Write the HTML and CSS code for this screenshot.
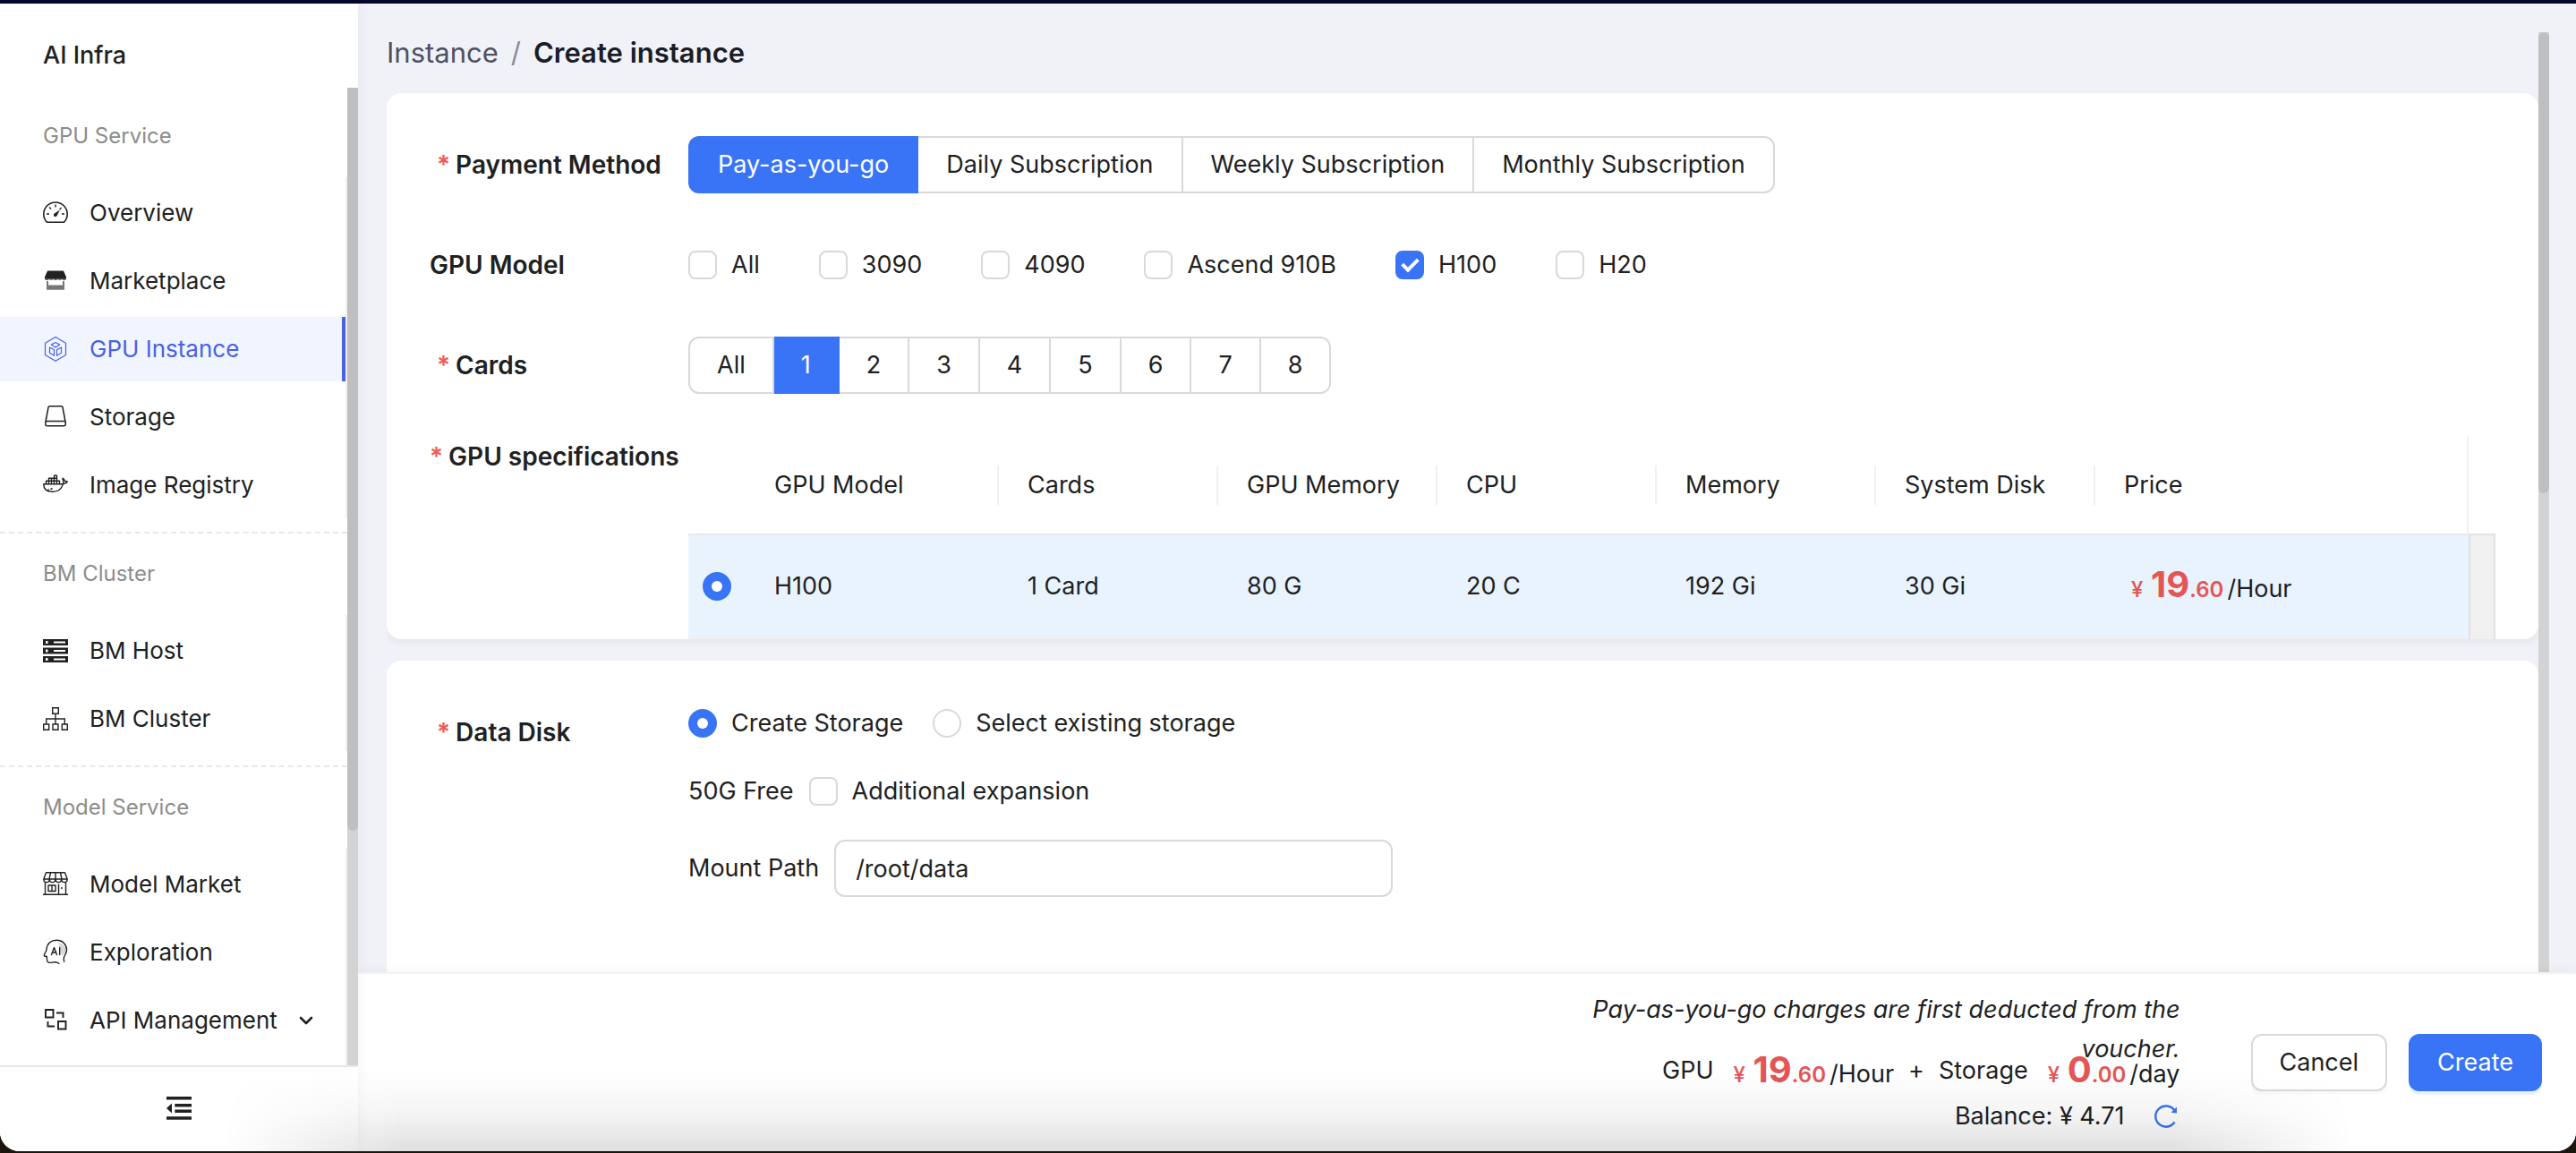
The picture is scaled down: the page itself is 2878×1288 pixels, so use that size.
FILE: index.html
```html
<!DOCTYPE html>
<html lang="en">
<head>
<meta charset="utf-8">
<title>Create instance - AI Infra</title>
<link rel="stylesheet" href="styles.css">
</head>
<body>
<div class="window">
  <aside class="sidebar">
    <h1 class="brand">AI Infra</h1>
    <div class="side-scroll">
      <nav class="nav">
        <section class="group">
          <h2 class="group-title">GPU Service</h2>
          <ul class="menu">
            <li><a class="item" href="#overview"><svg class="icon" viewBox="0 0 28 28"><path d="M4.500 24.300 A13.200 13.200 0 1 1 23.500 24.300 Z" fill="none" stroke="currentColor" stroke-width="1.600" stroke-linejoin="round"/><path d="M14 4.500v3M7 7.500l2 2M4 15h3M21 15h3M20.500 8l-2 2" stroke="currentColor" stroke-width="1.400"/><path d="M18.800 10.500l-3 6.300a2 2 0 1 1-2.600-2.600z" fill="currentColor"/></svg><span>Overview</span></a></li>
            <li><a class="item" href="#marketplace"><svg class="icon" viewBox="0 0 28 28"><path d="M5 2.500h18l3 7v1.500H2V9.500z" fill="currentColor"/><path d="M2 11h24v1a3 2 0 0 1-5 0 3 2 0 0 1-4.500 0 3 2 0 0 1-5 0 3 2 0 0 1-4.500 0 3 2 0 0 1-5 0z" fill="#555"/><path d="M5 14v8.500h18V14" fill="none" stroke="#777" stroke-width="2"/><path d="M4 18.500h20v5H4z" fill="#777"/></svg><span>Marketplace</span></a></li>
            <li><a class="item active" href="#instance" aria-current="page"><svg class="icon" viewBox="0 0 28 28"><g fill="none" stroke="currentColor" stroke-width="1.200" stroke-linejoin="round"><path d="M14 .5l11.500 6.700v13.400L14 27.300 2.500 20.600V7.200z"/><path d="M14 6.500l4.700 2.500-4.700 3-4.700-3z"/><path d="M7.500 12l5 2.800v6.400l-5-2.900zM20.500 12l-5 2.800v6.400l5-2.900z"/></g></svg><span>GPU Instance</span></a></li>
            <li><a class="item" href="#storage"><svg class="icon" viewBox="0 0 28 28"><g fill="none" stroke="currentColor" stroke-width="1.500" stroke-linejoin="round"><path d="M3 19L6 3q.3-1.300 1.600-1.300h12.800q1.300 0 1.600 1.300l3 16"/><rect x="2.800" y="18.500" width="22.500" height="5.200" rx="2"/></g></svg><span>Storage</span></a></li>
            <li><a class="item" href="#registry"><svg class="icon" viewBox="0 0 28 28"><g fill="none" stroke="currentColor" stroke-width="1.400" stroke-linejoin="round"><path d="M.7 12.700h20.800c1.700-.2 1.500-1.300 1.200-3-.3-1.400-.7-2-.7-3.500 1.700.9 2.300 1.800 2.500 3.300 1.200-.1 2 .1 2.800.6-.9 1.600-2.300 2.200-4.600 2.300C20.700 18.500 16.800 21.300 11 21.300 4 21.300.7 18.500.7 12.700z"/><path d="M3.500 12.500V9.300h15v3.200M6.500 9.300V6.200h9v6M9.500 6.200v6.300M12.500 12.500V3.300h3v3M6.500 9.300v3"/><path d="M4.500 19.500c3 0 5.500-1.200 6.800-3.200" stroke-dasharray="2.500 1.500"/></g></svg><span>Image Registry</span></a></li>
          </ul>
        </section>
        <section class="group">
          <h2 class="group-title">BM Cluster</h2>
          <ul class="menu">
            <li><a class="item" href="#bm-host"><svg class="icon" viewBox="0 0 28 28"><path d="M0 1h28v7H0zM0 10.500h28v7H0zM0 20h28v7H0z" fill="currentColor"/><path d="M3 3h2.500v3H3zM12 3.500h13v2H12zM3 12.500h2.500v3H3zM12 13h13v2H12zM3 22h2.500v3H3zM12 22.500h13v2H12z" fill="#fff"/></svg><span>BM Host</span></a></li>
            <li><a class="item" href="#bm-cluster"><svg class="icon" viewBox="0 0 28 28"><path d="M10.700 1.700h6.600v6.600h-6.600zM.7 20h6v6.300h-6zM11 20h6v6.300h-6zM21.300 20h6v6.300h-6zM14 8.300V20M3.700 20v-6h20.600v6" fill="none" stroke="currentColor" stroke-width="1.400"/></svg><span>BM Cluster</span></a></li>
          </ul>
        </section>
        <section class="group">
          <h2 class="group-title">Model Service</h2>
          <ul class="menu">
            <li><a class="item" href="#market"><svg class="icon" viewBox="0 0 28 28"><g fill="none" stroke="currentColor" stroke-width="1.400" stroke-linejoin="round"><path d="M3.500.8h21l2.700 7.200H.8zM8.500.8L7 8M14 .8V8M19.500.8L21 8"/><path d="M.8 8c0 4.800 6.300 4.800 6.500 0 .2 4.800 6.500 4.800 6.700 0 .2 4.800 6.500 4.800 6.700 0 .2 4.800 6.500 4.800 6.500 0"/><path d="M2.500 11.500V25M25.500 11.500V25M0 25.300h28M17.500 25V13.500M6 15h8v6.500H6zM10 15v6.500M21 17v2"/></g></svg><span>Model Market</span></a></li>
            <li><a class="item" href="#exploration"><svg class="icon" viewBox="0 0 28 28"><path d="M17 3q8 2 9 9l-5 6q-2-10-4-15z" fill="#d8d8d8"/><g fill="none" stroke="currentColor" stroke-width="1.400" stroke-linecap="round" stroke-linejoin="round"><path d="M4 10.500C4.500 4 9 .3 15 .3 22 .3 26.500 5 26.500 11c0 4-2.500 6-3.200 9 -.3 2 0 3 .4 4.200M4 10.500c0 2.500-2.500 4.500-2.700 6.500 0 1.300 1.200 1.500 3 1.500 0 3 .2 6 1.800 6.700 2 .8 5-.6 7.500-.4 2 .2 3.800.7 4.400 1.700"/><path d="M9.500 16.500L12.500 8.500l3 8M10.500 14h4M18.700 8.500v8"/></g></svg><span>Exploration</span></a></li>
            <li><a class="item" href="#api"><svg class="icon" viewBox="0 0 28 28"><path d="M3 2h8.500v8.500H3zM17 15h8.500v8.500H17zM15 5.500h7.500V11M5.500 15v5.500H13" fill="none" stroke="currentColor" stroke-width="1.900"/></svg><span>API Management</span><svg class="chevron" viewBox="0 0 16 10"><path d="M2 2l6 6 6-6" fill="none" stroke="currentColor" stroke-width="2.600" stroke-linecap="round" stroke-linejoin="round"/></svg></a></li>
          </ul>
        </section>
      </nav>
      <div class="track"><div class="thumb thumb-nav"></div></div>
    </div>
    <button class="collapse" type="button" aria-label="Collapse menu"><svg class="icon" viewBox="0 0 28 28"><path d="M0 1h28v3.500H0zM9.300 9H28v3.500H9.300zM9.300 15.500H28V19H9.300zM0 23.200h28v3.500H0zM0 14l6-5.500v11z" fill="currentColor"/></svg></button>
  </aside>

  <div class="page">
    <div class="content">
      <main class="main">
        <nav class="crumbs" aria-label="Breadcrumb"><a href="#instance">Instance</a><span class="slash">/</span><span class="here">Create instance</span></nav>
        <form class="cards" id="create-form">
          <section class="card">
            <div class="row" role="radiogroup" aria-labelledby="l-pay">
              <span class="label indent" id="l-pay"><i class="req">*</i>Payment Method</span>
              <div class="segments segments-wide">
                <label class="segment"><input type="radio" name="pay" checked>Pay-as-you-go</label>
                <label class="segment"><input type="radio" name="pay">Daily Subscription</label>
                <label class="segment"><input type="radio" name="pay">Weekly Subscription</label>
                <label class="segment"><input type="radio" name="pay">Monthly Subscription</label>
              </div>
            </div>
            <div class="row" role="group" aria-labelledby="l-model">
              <span class="label" id="l-model">GPU Model</span>
              <div class="checks">
                <label class="choice"><input class="box" type="checkbox">All</label>
                <label class="choice"><input class="box" type="checkbox">3090</label>
                <label class="choice"><input class="box" type="checkbox">4090</label>
                <label class="choice"><input class="box" type="checkbox">Ascend 910B</label>
                <label class="choice"><input class="box" type="checkbox" checked>H100</label>
                <label class="choice"><input class="box" type="checkbox">H20</label>
              </div>
            </div>
            <div class="row" role="radiogroup" aria-labelledby="l-cards">
              <span class="label indent" id="l-cards"><i class="req">*</i>Cards</span>
              <div class="segments">
                <label class="segment"><input type="radio" name="cards">All</label>
                <label class="segment"><input type="radio" name="cards" checked>1</label>
                <label class="segment"><input type="radio" name="cards">2</label>
                <label class="segment"><input type="radio" name="cards">3</label>
                <label class="segment"><input type="radio" name="cards">4</label>
                <label class="segment"><input type="radio" name="cards">5</label>
                <label class="segment"><input type="radio" name="cards">6</label>
                <label class="segment"><input type="radio" name="cards">7</label>
                <label class="segment"><input type="radio" name="cards">8</label>
              </div>
            </div>
            <div class="row row-table">
              <span class="label" id="l-spec"><i class="req">*</i>GPU specifications</span>
              <div class="table-wrap">
                <table class="specs" aria-labelledby="l-spec">
                  <colgroup><col class="c-pick"><col class="c-model"><col class="c-std"><col class="c-std"><col class="c-std"><col class="c-std"><col class="c-std"><col></colgroup>
                  <thead><tr><td></td><th><span>GPU Model</span></th><th><span>Cards</span></th><th><span>GPU Memory</span></th><th><span>CPU</span></th><th><span>Memory</span></th><th><span>System Disk</span></th><th><span>Price</span></th></tr></thead>
                  <tbody><tr><td class="pick"><input class="dot" type="radio" name="spec" aria-label="H100, 1 Card" checked></td><td>H100</td><td>1 Card</td><td>80 G</td><td>20 C</td><td>192 Gi</td><td>30 Gi</td><td><span class="price price-cell"><span class="yen">¥</span><b class="whole">19</b><b class="cents">.60</b><span class="unit">/Hour</span></span></td></tr></tbody>
                </table>
                <div class="table-scroll"></div>
              </div>
            </div>
          </section>
          <section class="card card-disk">
            <div class="row row-disk">
              <span class="label indent" id="l-disk"><i class="req">*</i>Data Disk</span>
              <div class="stack">
                <div class="line radios" role="radiogroup" aria-labelledby="l-disk">
                  <label class="choice"><input class="dot" type="radio" name="disk" checked>Create Storage</label>
                  <label class="choice"><input class="dot" type="radio" name="disk">Select existing storage</label>
                </div>
                <div class="line"><span>50G Free</span><label class="choice"><input class="box" type="checkbox">Additional expansion</label></div>
                <div class="line"><label for="mount">Mount Path</label><input class="field" id="mount" type="text" value="/root/data"></div>
              </div>
            </div>
          </section>
        </form>
      </main>
      <div class="track track-page"><div class="thumb thumb-page"></div></div>
    </div>
    <footer class="bar">
      <div class="summary">
        <p class="notice">Pay-as-you-go charges are first deducted from the voucher.</p>
        <div class="costs">
          <span class="cost-name">GPU</span><span class="price"><span class="yen">¥</span><b class="whole">19</b><b class="cents">.60</b><span class="unit">/Hour</span></span>
          <span class="plus">+</span>
          <span class="cost-name">Storage</span><span class="price"><span class="yen">¥</span><b class="whole">0</b><b class="cents">.00</b><span class="unit">/day</span></span>
        </div>
        <div class="balance"><span>Balance: ¥ 4.71</span><button class="refresh" type="button" aria-label="Refresh balance"><svg class="icon" viewBox="0 0 28 28"><path d="M23.500 20.500A11.600 11.600 0 1 1 23.200 7.200" fill="none" stroke="currentColor" stroke-width="2.400"/><path d="M26 3.500v7l-6.500-.8z" fill="currentColor"/></svg></button></div>
      </div>
      <div class="actions">
        <button class="btn" type="button">Cancel</button>
        <button class="btn btn-primary" type="submit" form="create-form">Create</button>
      </div>
    </footer>
  </div>
</div>
</body>
</html>
```
FILE: styles.css
```css
*, *::before, *::after { box-sizing: border-box; }
body {
  margin: 0;
  background: #1c150b;
  color: #202122;
  font: 27px/44px Inter, "Liberation Sans", "Noto Sans CJK SC", sans-serif;
}
button, input { font: inherit; color: inherit; margin: 0; }
h1, h2, p, ul { margin: 0; padding: 0; }
ul { list-style: none; }
a { color: inherit; text-decoration: none; }

.window {
  position: relative;
  display: grid;
  grid-template-columns: 400px minmax(0, 1fr);
  height: calc(100vh - 2px);
  border-top: 4px solid #03082b;
  border-radius: 0 0 22px 22px;
  background: #fff;
  overflow: hidden;
}
/* soft shade cast on the lower edge of the window */
.window::after {
  content: "";
  position: absolute;
  z-index: 3;
  left: 250px;
  right: 250px;
  bottom: 0;
  height: 90px;
  background: linear-gradient(rgba(0,0,0,0), rgba(0,0,0,.04) 50%, rgba(0,0,0,.12));
  -webkit-mask-image: linear-gradient(90deg, transparent, #000 200px, #000 calc(100% - 200px), transparent);
  mask-image: linear-gradient(90deg, transparent, #000 200px, #000 calc(100% - 200px), transparent);
  pointer-events: none;
}

.sidebar { z-index: 2; display: flex; flex-direction: column; min-height: 0; background: #fff; box-shadow: 0 0 16px rgba(0,0,0,.05); }
.brand { padding: 36px 48px 14px; font-size: 27px; line-height: 44px; font-weight: 500; }
.side-scroll { flex: 1; min-height: 0; display: grid; grid-template-columns: minmax(0, 1fr) 12px; }
.nav { display: flex; flex-direction: column; overflow: hidden; padding-top: 9px; }
.group + .group { margin-top: 16px; border-top: 2px dashed #e8e8e8; }
.group:last-child { flex: 1; display: flex; flex-direction: column; }
.group:last-child .menu { flex: 1; }
.group-title { padding: 24px 48px 25px; font-size: 24px; line-height: 42px; font-weight: 400; color: #8c8c8c; }
.menu { display: flex; flex-direction: column; gap: 4px; padding-top: 4px; border-right: 2px solid #f0f0f0; }
.item { display: flex; align-items: center; height: 72px; padding: 0 36px 0 48px; gap: 24px; font-size: 26px; }
.icon { display: block; width: 28px; height: 28px; overflow: visible; }
.active { background: #f0f5ff; color: #4a61e4; border-right: 4px solid #4a61e4; }
.chevron { width: 16px; height: 10px; margin-left: auto; }
.track { background: #d3d3d3; }
.thumb { background: #bfbfbf; border-radius: 0 0 6px 6px; }
.thumb-nav { height: 76%; }
.collapse { display: flex; align-items: center; justify-content: center; height: 96px; border: 0; border-top: 2px solid #e8e8e8; background: #fff; padding: 0 0 2px; }

.page { display: flex; flex-direction: column; min-width: 0; min-height: 0; background: #f1f2f8; }
.content { flex: 1; min-height: 0; display: grid; grid-template-columns: minmax(0, 1fr) 12px; padding: 0 30px 0 32px; }
.main { display: flex; flex-direction: column; min-height: 0; overflow: hidden; }
.track-page { margin-top: 32px; }
.thumb-page { height: 49%; border-radius: 6px; }
.crumbs { display: flex; gap: 14px; padding: 33px 0 23px; font-size: 31px; line-height: 44px; }
.crumbs a { color: #4e5162; }
.slash { color: #8a8c96; }
.here { font-weight: 600; color: #1a1d28; }
.cards { flex: 1; display: flex; flex-direction: column; gap: 24px; }
.card { display: flex; flex-direction: column; gap: 48px; padding: 48px 48px 0; border-radius: 16px; background: #fff; box-shadow: 0 4px 8px rgba(0,0,0,.05); }
.card-disk { flex: 1; border-radius: 16px 16px 0 0; }

.row { display: grid; grid-template-columns: 289px minmax(0, 1fr); align-items: center; min-height: 64px; }
.row-table { align-items: start; }
.label { font-size: 28px; font-weight: 600; white-space: nowrap; }
.indent { padding-left: 8px; }
.req { margin-right: 6px; font-style: normal; color: #f05b56; }

.segments { display: flex; }
.segment { position: relative; height: 64px; padding: 8px 30px; line-height: 44px; border: 2px solid #d9d9d9; border-left-width: 0; white-space: nowrap; }
.segments-wide .segment { padding: 8px 31px; }
.segment:first-child { border-left-width: 2px; border-radius: 12px 0 0 12px; }
.segment:last-child { border-radius: 0 12px 12px 0; }
.segment input { position: absolute; opacity: 0; }
.segment:has(input:checked) { background: #3974f6; border-color: #3974f6; color: #fff; }

.checks { display: flex; gap: 66px; }
.choice { display: flex; align-items: center; gap: 16px; white-space: nowrap; }
.box, .dot { appearance: none; flex: none; display: grid; place-items: center; width: 32px; height: 32px; border: 2px solid #d9d9d9; background: #fff; }
.box { border-radius: 8px; }
.dot { border-radius: 50%; }
.box:checked, .dot:checked { background: #3974f6; border-color: #3974f6; }
.box:checked::after { content: ""; width: 11px; height: 18px; margin-bottom: 4px; border: solid #fff; border-width: 0 4px 4px 0; rotate: 45deg; }
.dot:checked::after { content: ""; width: 12px; height: 12px; border-radius: 50%; background: #fff; }

.table-wrap { display: grid; grid-template-columns: minmax(0, 1fr) 30px; }
.specs { width: 100%; table-layout: fixed; border-collapse: separate; border-spacing: 0; }
.c-pick { width: 64px; }
.c-model { width: 283px; }
.c-std { width: 245px; }
.specs th, .specs td { padding: 0 0 0 32px; text-align: left; font-weight: 400; white-space: nowrap; }
.specs thead tr { height: 110px; }
.specs thead th, .specs thead td { border-bottom: 2px solid #e8e8e8; }
.specs th span { display: block; border-right: 2px solid #f0f0f0; }
.specs th:last-child { border-right: 2px solid #f0f0fa; }
.specs th:last-child span { border-right: 0; }
.specs tbody tr { height: 116px; background: #e9f3fe; }
.specs tbody td { border-bottom: 2px solid #f0f0f0; }
.specs .pick { padding-left: 16px; }
.table-scroll { margin-top: 108px; background: #f0f0f0; border: solid #e2e2e2; border-width: 2px 2px 0; }

.price { display: flex; align-items: baseline; line-height: 48px; color: #e45656; text-align: left; }
.price-cell { padding: 2px 0 0 8px; }
.yen { width: 22px; font-size: 24px; font-weight: 500; }
.whole { font-size: 40px; font-weight: 700; }
.cents { font-size: 24px; font-weight: 600; }
.unit { margin-left: 4px; color: #1a1d28; }

.row-disk { align-items: start; }
.row-disk .label { padding-top: 10px; }
.stack { display: flex; flex-direction: column; gap: 32px; }
.line { display: flex; align-items: center; gap: 17px; }
.radios { gap: 33px; }
.field { width: 624px; height: 64px; padding: 0 22px; border: 2px solid #d9d9d9; border-radius: 12px; background: #fff; }

.bar { z-index: 1; display: flex; justify-content: flex-end; gap: 79px; height: 200px; padding: 18px 38px 0 0; border-top: 2px solid #f3f3f5; background: #fff; box-shadow: 0 -4px 12px rgba(0,0,0,.03); }
.summary { width: 680px; text-align: right; }
.notice { height: 66px; font-style: italic; }
.costs, .balance { display: flex; justify-content: flex-end; align-items: center; }
.costs { height: 48px; }
.cost-name { margin-right: 22px; }
.costs .price { padding-top: 4px; }
.plus { margin: 0 16px; }
.balance { height: 54px; gap: 32px; padding-right: 2px; }
.refresh { padding: 0; border: 0; background: none; color: #3974f6; }
.actions { display: flex; gap: 24px; padding-top: 49px; }
.btn { height: 64px; padding: 0 30px; border: 2px solid #d9d9d9; border-radius: 12px; background: #fff; box-shadow: 0 4px 0 rgba(0,0,0,.02); }
.btn-primary { border-color: #3974f6; background: #3974f6; color: #fff; box-shadow: 0 4px 0 #e8f2ff; }
```
